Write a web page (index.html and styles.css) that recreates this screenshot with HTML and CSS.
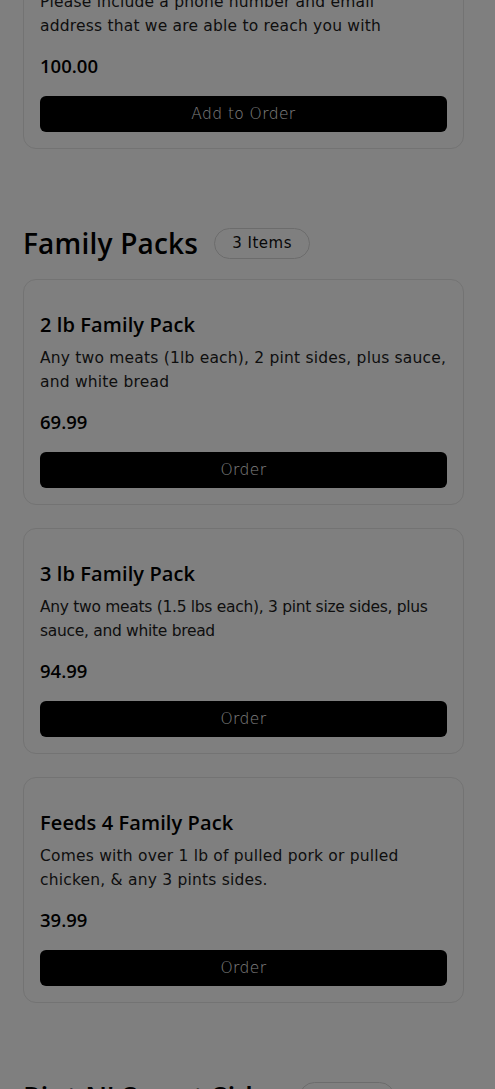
FILE: index.html
```html
<!DOCTYPE html>
<html>
<head>
<meta charset="utf-8">
<link rel="stylesheet" href="styles.css">
</head>
<body>
<main class="menu">
  <section class="section section-first">
    <article class="card">
      <h3 class="card-title">Catering Deposit</h3>
      <p class="card-desc">Please include a phone number and email<br>address that we are able to reach you with</p>
      <div class="card-price">100.00</div>
      <button class="btn">Add to Order</button>
    </article>
  </section>

  <section class="section">
    <header class="section-head">
      <h2 class="section-title">Family Packs</h2>
      <span class="badge">3 Items</span>
    </header>
    <div class="cards">
      <article class="card">
        <h3 class="card-title">2 lb Family Pack</h3>
        <p class="card-desc">Any two meats (1lb each), 2 pint sides, plus sauce,<br>and white bread</p>
        <div class="card-price">69.99</div>
        <button class="btn">Order</button>
      </article>
      <article class="card">
        <h3 class="card-title">3 lb Family Pack</h3>
        <p class="card-desc card-desc-tight">Any two meats (1.5 lbs each), 3 pint size sides, plus<br>sauce, and white bread</p>
        <div class="card-price">94.99</div>
        <button class="btn">Order</button>
      </article>
      <article class="card">
        <h3 class="card-title">Feeds 4 Family Pack</h3>
        <p class="card-desc">Comes with over 1 lb of pulled pork or pulled<br>chicken, &amp; any 3 pints sides.</p>
        <div class="card-price">39.99</div>
        <button class="btn">Order</button>
      </article>
    </div>
  </section>

  <section class="section">
    <header class="section-head">
      <h2 class="section-title">Pint N' Sweet Sides</h2>
      <span class="badge">6 Items</span>
    </header>
  </section>
</main>
<div class="overlay"></div>
</body>
</html>
```
FILE: styles.css
```css
* { box-sizing: border-box; }
html, body { margin: 0; padding: 0; }
body {
  background: #ffffff;
  font-family: "DejaVu Sans", "Noto Sans", sans-serif;
  color: #000;
  overflow: hidden;
  height: 1089px;
}
.menu {
  padding: 0 31px 0 23px;
  margin-top: -77px;
}
.section { padding-top: 78px; }
.section-first { padding-top: 0; }
.section-head {
  display: flex;
  align-items: center;
  gap: 16px;
  margin-bottom: 20px;
}
.section-title {
  margin: 0;
  font-family: "Open Sans", "DejaVu Sans", sans-serif;
  font-size: 28px;
  font-weight: 600;
  line-height: 32px;
  letter-spacing: 0.2px;
}
.badge {
  display: inline-flex;
  align-items: center;
  height: 31px;
  padding: 0 17px;
  border: 1px solid #d8d8d8;
  border-radius: 16px;
  font-size: 15px;
  letter-spacing: 0.5px;
  color: #111;
}
.cards { display: flex; flex-direction: column; gap: 23px; }
.card {
  border: 1px solid #e6e6e6;
  border-radius: 13px;
  padding: 32px 16px 16px;
  background: #fff;
}
.card-title {
  margin: 0 0 8px;
  font-family: "Open Sans", "DejaVu Sans", sans-serif;
  font-size: 20px;
  line-height: 26px;
  font-weight: 600;
  letter-spacing: 0.1px;
}
.card-desc {
  margin: 0 0 16px;
  font-size: 15.5px;
  line-height: 24px;
  color: #1c1c1c;
  letter-spacing: 0.2px;
  white-space: nowrap;
}
.card-desc-tight { letter-spacing: -0.3px; }
.card-price {
  font-family: "Open Sans", "DejaVu Sans", sans-serif;
  font-size: 18.5px;
  font-weight: 600;
  line-height: 24px;
  margin-bottom: 18px;
}
.btn {
  display: block;
  width: 100%;
  height: 36px;
  border: none;
  border-radius: 6px;
  background: #000;
  color: #fff;
  font-family: inherit;
  font-size: 15.5px;
  font-weight: 300;
  letter-spacing: 0.4px;
  cursor: pointer;
}
.overlay {
  position: fixed;
  inset: 0;
  background: rgba(0,0,0,0.5);
}
```
